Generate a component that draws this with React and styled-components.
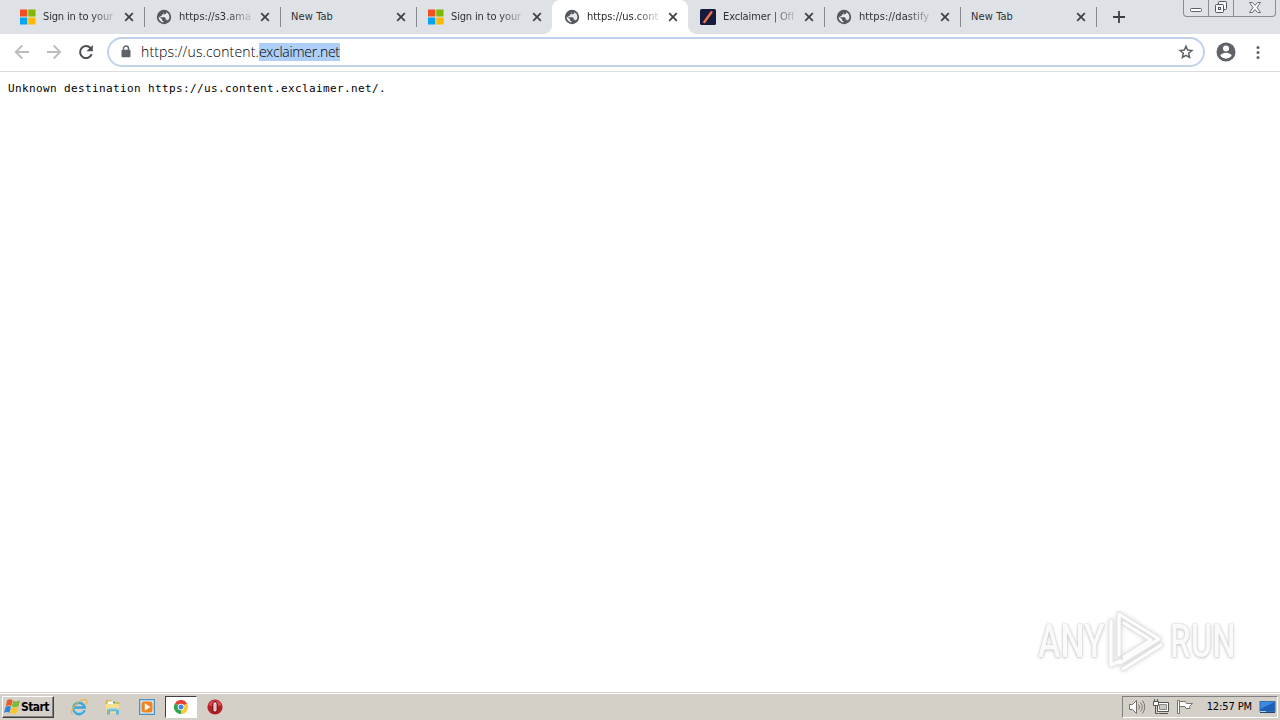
import React from "react";
import styled, { createGlobalStyle } from "styled-components";

const colors = {
  frame: "#dee1e6",
  icon: "#5f6368",
  disabled: "#babcbe",
  ink: "#3c4043",
  focus: "#c0d1ec",
  selection: "#accef7",
  taskbar: "#d4d0c8",
};

const tabs = [
  { title: "Sign in to your", icon: "microsoft", spacing: "-0.15px", divider: true },
  { title: "https://s3.ama", icon: "globe", spacing: "0.02px", divider: true },
  { title: "New Tab", spacing: "0.1px", divider: true },
  { title: "Sign in to your", icon: "microsoft", spacing: "-0.15px" },
  { title: "https://us.cont", icon: "globe", active: true, spacing: "-0.02px" },
  { title: "Exclaimer | Off", icon: "exclaimer", spacing: "-0.12px", divider: true },
  { title: "https://dastify", icon: "globe", spacing: "0.1px", divider: true },
  { title: "New Tab", spacing: "0.1px", divider: true },
];

const MicrosoftIcon = () => (
  <svg width="16" height="16" viewBox="0 0 16 16">
    <path fill="#f25022" d="M0 0.5h7.3v7H0z" />
    <path fill="#7fba00" d="M8.3 0.5h7.2v7H8.3z" />
    <path fill="#00a4ef" d="M0 8.5h7.3v7H0z" />
    <path fill="#ffb900" d="M8.3 8.5h7.2v7H8.3z" />
  </svg>
);

const GlobeIcon = () => (
  <svg width="16" height="16" viewBox="0 0 16 16">
    <circle cx="8" cy="8" r="7.2" fill="#54575c" />
    <path
      fill="#e6e8eb"
      d="M8.6 2.5 7.2 4v1.5H5.7V7H4.3v1.2h4.4l1 1v1.5h1.2l.8.9c1-.9 1.7-2.2 1.7-3.6 0-2.2-1.3-4-3.1-4.8v.6c0 .8-.6 1.4-1.4 1.4H7.6V4zM2.7 7.4C2.4 10.6 4.6 13 7.4 13.4v-1.3c-.8 0-1.4-.6-1.4-1.4V10z"
    />
  </svg>
);

const ExclaimerIcon = () => (
  <svg width="16" height="16" viewBox="0 0 16 16">
    <rect width="16" height="16" rx="1.5" fill="#161a3c" />
    <path d="M4.4 13 11.4 3.2" stroke="#f0704a" strokeWidth="2.5" strokeLinecap="round" />
  </svg>
);

const favicons = {
  microsoft: MicrosoftIcon,
  globe: GlobeIcon,
  exclaimer: ExclaimerIcon,
};

const CloseIcon = () => (
  <svg width="10" height="10" viewBox="0 0 10 10">
    <path d="m1.2 1.2 7.6 7.6m0-7.6L1.2 8.8" stroke={colors.ink} strokeWidth="1.7" />
  </svg>
);

const BrowserTab = ({ tab }) => {
  const Favicon = favicons[tab.icon];
  return (
    <Tab $active={tab.active} $divider={tab.divider}>
      {Favicon && <Favicon />}
      <TabTitle $spacing={tab.spacing} $active={tab.active} $fade={Boolean(Favicon)}>
        {tab.title}
      </TabTitle>
      <CloseIcon />
    </Tab>
  );
};

const WindowControls = () => (
  <Controls>
    <ControlButton $width={24}>
      <svg width="14" height="14" viewBox="0 0 14 14">
        <rect x="1.5" y="7.5" width="11" height="3" rx="1" fill="#fff" stroke="#5c6068" />
      </svg>
    </ControlButton>
    <ControlButton $width={25}>
      <svg width="14" height="14" viewBox="0 0 14 14" fill="#f7f7f9" stroke="#50545c">
        <rect x="4.5" y="0.5" width="8" height="8" rx="1" />
        <rect x="1.5" y="3.5" width="8" height="8" rx="1" />
        <rect x="4.5" y="6.5" width="2" height="2" />
      </svg>
    </ControlButton>
    <ControlButton $width={42}>
      <svg width="14" height="14" viewBox="0 0 14 14">
        <path
          d="M1.5 1.5h3L7 4.500l2.500-3h3L9 6.500l3.500 5h-3L7 8.500l-2.500 3h-3L5 6.500z"
          fill="#fff"
          stroke="#686c74"
        />
      </svg>
    </ControlButton>
  </Controls>
);

const BackIcon = () => (
  <svg width="16" height="16" viewBox="0 0 16 16" fill="none">
    <path d="M15 8H2M8.3 1.5 1.8 8l6.5 6.5" stroke="currentColor" strokeWidth="1.8" />
  </svg>
);

const ForwardIcon = () => (
  <svg width="16" height="16" viewBox="0 0 16 16" fill="none">
    <path d="M1 8h13M7.7 1.5 14.2 8l-6.5 6.5" stroke="currentColor" strokeWidth="1.8" />
  </svg>
);

const ReloadIcon = () => (
  <svg width="16" height="16" viewBox="0 0 16 16" fill="none">
    <path d="M13.7 10.2A6 6 0 1 1 12.5 4" stroke="#4c4f54" strokeWidth="2" />
    <path d="M14.8 1v6.3H8.5z" fill="#4c4f54" />
  </svg>
);

const LockIcon = () => (
  <svg width="10" height="13" viewBox="0 0 10 13">
    <path d="M2.5 6V3.5a2.5 2.5 0 0 1 5 0V6" fill="none" stroke={colors.icon} strokeWidth="1.4" />
    <rect x="0.5" y="4.8" width="9" height="7.4" rx="1" fill={colors.icon} />
  </svg>
);

const StarIcon = () => (
  <svg width="16" height="16" viewBox="0 0 16 16">
    <path
      d="m8 2.200 1.700 3.900 4.200.4-3.200 2.800.9 4.200L8 11.300l-3.600 2.200.9-4.200-3.200-2.800 4.200-.4z"
      fill="none"
      stroke={colors.icon}
      strokeWidth="1.5"
    />
  </svg>
);

const ProfileIcon = () => (
  <svg width="20" height="20" viewBox="0 0 20 20">
    <circle cx="10" cy="10" r="9.5" fill={colors.icon} />
    <circle cx="10" cy="6.6" r="3" fill="#fff" />
    <path d="M4.2 13.6c1.2-2 3.5-2.8 5.8-2.8s4.6.8 5.8 2.8a7 7 0 0 1-11.6 0" fill="#fff" />
  </svg>
);

const MenuIcon = () => (
  <svg width="4" height="16" viewBox="0 0 4 16" fill={colors.icon}>
    <circle cx="2" cy="3.5" r="1.5" />
    <circle cx="2" cy="8.5" r="1.5" />
    <circle cx="2" cy="13.5" r="1.5" />
  </svg>
);

const WindowsFlag = () => (
  <svg width="17" height="16" viewBox="0 0 17 16">
    <path d="M3.2 1.2C5.5-.3 7.2.2 8.6 1.4L7.2 7.2C5.3 6 3.8 6.2 1.8 7.2z" fill="#ed5a26" />
    <path d="M9.2 1.8c2 1 4.2.9 7-.8L14.5 7.2c-2.3 1.2-4.6 1.2-6.7.3z" fill="#7fb93a" />
    <path d="M1.6 7.9c2-1.2 3.7-1 5.3 0l-1.5 5.9C3.8 12.6 2.2 12.6 0 13.7z" fill="#3184d5" />
    <path d="M7.6 8.2c2 .9 4.2.9 6.7-.3l-1.7 6c-2.4 1.3-4.5 1.2-6.5.2z" fill="#fdc52c" />
  </svg>
);

const ExplorerIcon = () => (
  <svg width="18" height="18" viewBox="0 0 18 18" fill="none">
    <path d="M14.5 12.2A5.7 5.7 0 1 1 14.7 9.5H4.5" stroke="#3aa5df" strokeWidth="2.5" />
    <path d="M13.8 12.2A5.500 5.500 0 0 1 4 11" stroke="#85d5f5" />
    <path d="M2.5 16.2C-.5 14 4.5 6 10 3c3-1.700 6.500-2.500 7 0 .2 1.300-.6 2.900-1.400 4" stroke="#e7b844" strokeWidth="1.2" />
  </svg>
);

const FolderIcon = () => (
  <svg width="18" height="18" viewBox="0 0 18 18">
    <path d="M2 2.5h5l1 2h7v10H2z" fill="#e7c45a" stroke="#c7a64b" strokeWidth=".6" />
    <path d="M4 3.5h7v3H4z" fill="#fff" />
    <path d="M9 3.5h2v2H9z" fill="#5ba64d" />
    <path d="M1.5 6h14v9h-14z" fill="#f6df91" />
    <path d="M3 16.5v-4c0-3.500 12-3.500 12 0v4h-3v-3.200H6v3.200z" fill="#62b8dc" />
    <path d="M4.5 11.800c1-1.400 8-1.400 9 0" fill="none" stroke="#b9e5f3" />
  </svg>
);

const MediaIcon = () => (
  <svg width="18" height="18" viewBox="0 0 18 18">
    <rect x="1.5" y="1.5" width="15" height="15" fill="#a9d2ed" stroke="#4e91bf" />
    <path d="M3 3h12v12H3z" fill="#d8eaf4" />
    <rect x="3.5" y="3.5" width="11" height="11" rx="2.5" fill="#f2841f" />
    <path d="m6.800 5.200 5.500 3.800-5.500 3.800z" fill="#fff" />
  </svg>
);

const ChromeIcon = () => (
  <svg width="14" height="14" viewBox="0 0 14 14">
    <path d="M7 7 .9 3.5A7 7 0 0 1 13.1 3.5z" fill="#e34133" />
    <path d="M7 7 13.1 3.5A7 7 0 0 1 7 14z" fill="#fccb2e" />
    <path d="M7 7v7A7 7 0 0 1 .9 3.5z" fill="#31a452" />
    <circle cx="7" cy="7" r="3.3" fill="#fff" />
    <circle cx="7" cy="7" r="2.5" fill="#4285e8" />
  </svg>
);

const OperaIcon = () => (
  <svg width="16" height="16" viewBox="0 0 16 16">
    <circle cx="8" cy="8" r="7.6" fill="#b71f27" />
    <path d="M1.5 6A7 7 0 0 1 14.5 6Q8 10 1.5 6" fill="#d94c50" />
    <ellipse cx="8" cy="8" rx="3.2" ry="5.9" fill="#87151c" />
    <rect x="6.5" y="3.5" width="3" height="9" rx="1.4" fill="#fff" />
    <path d="M8 4.500v7" stroke="#a83238" strokeWidth=".6" />
  </svg>
);

const SpeakerIcon = () => (
  <svg width="18" height="16" viewBox="0 0 18 16" fill="none" stroke="#6e6e6b">
    <path d="M1.5 5.5h3l4-4v13l-4-4h-3z" fill="#fff" />
    <path d="M10.5 5.5q2 2.500 0 5m2-7q3.500 4.500 0 9m2-11q4.500 6.500 0 13" strokeWidth=".9" />
  </svg>
);

const NetworkIcon = () => (
  <svg width="17" height="16" viewBox="0 0 17 16" stroke="#555653">
    <path d="M4.5 3.5h11v9h-11z" fill="#fff" />
    <path d="M6.5 5.5h7v5h-7z" fill="#c8c8c4" stroke="#8a8a87" />
    <path d="M6 14.5h9" fill="none" />
    <path d="M.5 2.5h5v4h-5zM1.5 0v2m3-2v2" fill="#fff" />
    <path d="M2.5 7v7.500h3" fill="none" />
  </svg>
);

const FlagIcon = () => (
  <svg width="17" height="16" viewBox="0 0 17 16" stroke="#747471">
    <path d="M2.5 2.5h6l1 2h6l-3 3 .5 2h-4l-1-2h-5.500z" fill="#fff" />
    <path d="M.5 1.5h2v13h-2z" fill="#fff" />
  </svg>
);

const DesktopIcon = () => (
  <svg width="17" height="14" viewBox="0 0 17 14">
    <rect x="1" y="1.5" width="15" height="10" fill="#1e5fb8" stroke="#356fae" />
    <path d="M1.5 2h14L1.5 9z" fill="#3c8add" />
    <path d="M1 11.5h6" stroke="#a8d1f0" />
    <path d="M1 12.5h15" stroke="#24466f" />
  </svg>
);

const playLines =
  "M12 47V6l40 25-39 24M4 13v44l9-4M17 15l27 17-27 17M16 61l38-24";

const PlayMark = () => (
  <PlayDrawing width="60" height="66" viewBox="0 0 60 66">
    <path d={playLines} stroke="#e2e2e2" strokeWidth="4.8" />
    <path d={playLines} stroke="#fdfdfd" strokeWidth="3.2" />
  </PlayDrawing>
);

const App = () => (
  <Browser>
    <GlobalStyle />
    <TabStrip>
      <TabList>
        {tabs.map((tab, key) => (
          <BrowserTab key={key} tab={tab} />
        ))}
      </TabList>
      <NewTabButton>
        <svg width="12" height="12" viewBox="0 0 12 12">
          <path d="M6 0v12M0 6h12" stroke={colors.ink} strokeWidth="1.8" />
        </svg>
      </NewTabButton>
      <WindowControls />
    </TabStrip>
    <Toolbar>
      <NavButton $disabled>
        <BackIcon />
      </NavButton>
      <NavButton $disabled>
        <ForwardIcon />
      </NavButton>
      <NavButton>
        <ReloadIcon />
      </NavButton>
      <AddressBar>
        <LockIcon />
        <Address>
          <Host>https://us.content.</Host>
          <Selected>exclaimer.net</Selected>
        </Address>
        <StarIcon />
      </AddressBar>
      <Profile>
        <ProfileIcon />
      </Profile>
      <MenuIcon />
    </Toolbar>
    <Page>
      <Message>Unknown destination https://us.content.exclaimer.net/.</Message>
      <Watermark>
        <Brand $width={66} $scale={0.72}>
          <span>ANY</span>
        </Brand>
        <PlayMark />
        <Brand $width={62} $scale={0.7}>
          <span>RUN</span>
        </Brand>
      </Watermark>
    </Page>
    <Taskbar>
      <StartButton>
        <WindowsFlag />
        <span>Start</span>
      </StartButton>
      <QuickLaunch>
        <TaskButton>
          <ExplorerIcon />
        </TaskButton>
        <TaskButton>
          <FolderIcon />
        </TaskButton>
        <TaskButton>
          <MediaIcon />
        </TaskButton>
        <TaskButton $pressed>
          <ChromeIcon />
        </TaskButton>
        <TaskButton>
          <OperaIcon />
        </TaskButton>
      </QuickLaunch>
      <Tray>
        <SpeakerIcon />
        <NetworkIcon />
        <FlagIcon />
        <Clock>12:57 PM</Clock>
        <DesktopIcon />
      </Tray>
    </Taskbar>
  </Browser>
);

const GlobalStyle = createGlobalStyle`
  * {
    box-sizing: border-box;
  }

  body {
    margin: 0;
    overflow: hidden;
    font-family: "DejaVu Sans Condensed", "DejaVu Sans", sans-serif;
  }

  svg {
    display: block;
    flex-shrink: 0;
  }
`;

const Browser = styled.div`
  display: flex;
  flex-direction: column;
  width: 1280px;
  height: 720px;
  background: #fff;
`;

const TabStrip = styled.div`
  display: flex;
  height: 34px;
  background: ${colors.frame};
`;

const TabList = styled.div`
  display: flex;
  padding-left: 8px;
`;

const Tab = styled.div`
  position: relative;
  display: flex;
  align-items: center;
  width: 136px;
  height: 34px;
  padding: 0 10px 0 12px;
  background: ${({ $active }) => ($active ? "#fff" : "transparent")};
  border-radius: 8px 8px 0 0;

  > svg:last-child {
    margin-left: auto;
  }

  &::after {
    content: "";
    display: ${({ $divider }) => ($divider ? "block" : "none")};
    position: absolute;
    right: -1px;
    top: 7px;
    width: 1px;
    height: 20px;
    background: #85888d;
  }

  ${({ $active }) =>
    $active &&
    `
    &::before {
      content: "";
      position: absolute;
      left: -8px;
      right: -8px;
      bottom: 0;
      height: 8px;
      background:
        radial-gradient(circle at 0 0, transparent 7.5px, #fff 8px) left / 8px 8px no-repeat,
        radial-gradient(circle at 100% 0, transparent 7.5px, #fff 8px) right / 8px 8px no-repeat;
    }
  `}
`;

const TabTitle = styled.span`
  margin-left: 7px;
  white-space: nowrap;
  font-size: 11px;
  line-height: 18px;
  letter-spacing: ${({ $spacing }) => $spacing};
  color: ${({ $active }) => ($active ? "#1f2225" : "#2d3034")};
  mask-image: ${({ $fade }) =>
    $fade ? "linear-gradient(90deg, #000 48px, rgba(0, 0, 0, 0.15) 72px)" : "none"};

  &:first-child {
    margin-left: -1px;
  }
`;

const NewTabButton = styled.div`
  display: flex;
  align-items: center;
  margin-left: 17px;
`;

const Controls = styled.div`
  display: flex;
  height: 17px;
  margin-left: auto;
  margin-right: 4px;
  border: 1px solid #8a8d94;
  border-top: 0;
  border-radius: 0 0 4px 4px;
`;

const ControlButton = styled.div`
  display: flex;
  justify-content: center;
  width: ${({ $width }) => $width}px;
  padding-top: 1px;

  & + & {
    border-left: 1px solid #8a8d94;
  }
`;

const Toolbar = styled.div`
  display: flex;
  align-items: center;
  height: 38px;
  padding: 0 20px 2px 6px;
  border-bottom: 1px solid #dadce0;
`;

const NavButton = styled.div`
  display: flex;
  justify-content: center;
  width: 32px;
  color: ${({ $disabled }) => ($disabled ? colors.disabled : colors.icon)};
`;

const AddressBar = styled.div`
  display: flex;
  align-items: center;
  width: 1098px;
  height: 30px;
  margin-left: 5px;
  padding: 0 9px 0 12px;
  border: 2px solid ${colors.focus};
  border-radius: 15px;

  > svg:last-child {
    margin-left: auto;
  }
`;

const Address = styled.div`
  display: flex;
  margin-left: 10px;
  font-family: "Open Sans", sans-serif;
  font-weight: 300;
  font-size: 14px;
  line-height: 18px;
  color: #000;
`;

const Host = styled.span`
  letter-spacing: 0.14px;
`;

const Selected = styled.span`
  letter-spacing: -0.29px;
  background: ${colors.selection};
`;

const Profile = styled.div`
  margin: 0 20px 0 11px;
`;

const Page = styled.main`
  position: relative;
  flex: 1;
`;

const Message = styled.pre`
  margin: 0;
  padding: 9px 8px 8px;
  font-family: "DejaVu Sans Mono", monospace;
  font-size: 11px;
  letter-spacing: 0.378px;
  line-height: 16px;
  color: #000;
`;

const Watermark = styled.div`
  position: absolute;
  right: 48px;
  bottom: 18px;
  display: flex;
  align-items: center;
  gap: 3px;
`;

const PlayDrawing = styled.svg`
  fill: none;
  stroke-linecap: round;
  stroke-linejoin: round;
  filter: drop-shadow(0 0 2px #d4d4d4);
`;

const Brand = styled.div`
  width: ${({ $width }) => $width}px;

  span {
    display: inline-block;
    transform: scaleX(${({ $scale }) => $scale});
    transform-origin: left;
    font-family: Roboto, sans-serif;
    font-size: 47px;
    font-weight: 500;
    line-height: 50px;
    color: #fafafa;
    text-shadow: 0 0 2px #bbb, 0 1px 4px #ccc;
  }
`;

const Taskbar = styled.footer`
  display: flex;
  align-items: center;
  height: 28px;
  padding: 2px;
  background: ${colors.taskbar};
  border-top: 1px solid #d4d0c8;
  box-shadow: inset 0 1px #fff;
`;

const StartButton = styled.div`
  display: flex;
  align-items: center;
  width: 52px;
  height: 22px;
  padding-left: 1px;
  border: 1px solid;
  border-color: #fff #404040 #404040 #fff;
  box-shadow: inset -1px -1px #808080;
  font-size: 12px;
  font-weight: 700;
  letter-spacing: -0.55px;
`;

const QuickLaunch = styled.div`
  display: flex;
  margin-left: 9px;
  gap: 2px;
`;

const TaskButton = styled.div`
  display: flex;
  align-items: center;
  justify-content: center;
  width: 32px;
  height: 22px;
  background: ${({ $pressed }) => ($pressed ? "#fff" : "transparent")};
  border: 1px solid;
  border-color: ${({ $pressed }) =>
    $pressed ? "#404040 #fff #fff #404040" : "transparent"};
`;

const Tray = styled.div`
  display: flex;
  align-items: center;
  width: 156px;
  height: 22px;
  margin-left: auto;
  padding: 0 1px 0 5px;
  gap: 7px;
  border: 1px solid;
  border-color: #808080 #fff #fff #808080;
`;

const Clock = styled.span`
  margin-left: auto;
  white-space: nowrap;
  font-size: 11px;
  letter-spacing: -0.1px;
`;

export default App;
